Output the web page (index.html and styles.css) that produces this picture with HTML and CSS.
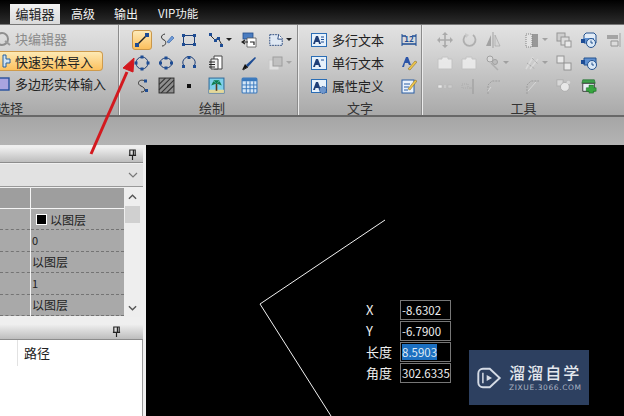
FILE: index.html
```html
<!DOCTYPE html>
<html lang="en">

<head>
	<meta charset="UTF-8" />
	<title>CAD编辑器</title>
	<link rel="stylesheet" href="styles.css">
</head>

<body>
	<div class="window">
		<div class="tabbar">
			<div class="tab active">编辑器</div>
			<div class="tab tab-high">高级</div>
			<div class="tab tab-out">输出</div>
			<div class="tab tab-vip">VIP功能</div>
		</div>

		<div class="ribbon">
			<div class="group group-select">
				<div class="select-rows">
					<div class="select-row muted">
						<svg class="ic-clip" viewBox="0 0 12 16"><circle cx="2" cy="8" r="6" fill="none" stroke="#8f8f8f" stroke-width="2"/><path d="M5 10l5 4" stroke="#9a9a9a" stroke-width="2"/></svg>
						块编辑器
					</div>
					<div class="select-row picked">
						<svg class="ic-clip" viewBox="0 0 12 16"><path d="M3 2h3v4h4v4H6v4H3z" fill="#cfe3f5" stroke="#27609e"/></svg>
						快速实体导入
					</div>
					<div class="select-row">
						<svg class="ic-clip" viewBox="0 0 12 16"><rect x="-4" y="2" width="13" height="12" fill="#a9a4e0" stroke="#27509e" stroke-width="1.4"/></svg>
						多边形实体输入
					</div>
				</div>
				<div class="group-label label-select">选择</div>
			</div>

			<div class="group group-draw">
				<div class="draw-grid">
					<span class="hot">
						<svg class="ic" viewBox="0 0 16 16"><path d="M3 13L13 3" stroke="#222" stroke-width="1.4"/><rect x="1" y="11" width="4" height="4" fill="#1d4c94"/><rect x="11" y="1" width="4" height="4" fill="#1d4c94"/></svg>
					</span>
					<svg class="ic" viewBox="0 0 16 16"><path d="M7 2C2 3 3 7 6 8s2 6-2 6" fill="none" stroke="#333"/><path d="M9 10l5-6 2 2-5 5z" fill="#6f9bd8" stroke="#2e5ea5" stroke-width=".6"/></svg>
					<svg class="ic" viewBox="0 0 16 16"><rect x="2.5" y="3.5" width="11" height="9" fill="none" stroke="#1d3f78"/><rect x="1" y="2" width="3" height="3" fill="#1d4c94"/><rect x="12" y="2" width="3" height="3" fill="#1d4c94"/><rect x="1" y="11" width="3" height="3" fill="#1d4c94"/><rect x="12" y="11" width="3" height="3" fill="#1d4c94"/></svg>
					<span class="with-caret">
						<svg class="ic" viewBox="0 0 16 16"><path d="M2 3l5 5 3-2 4 7" fill="none" stroke="#333"/><rect x="1" y="1" width="3" height="3" fill="#1d4c94"/><rect x="6" y="7" width="3" height="3" fill="#1d4c94"/><rect x="9" y="5" width="3" height="3" fill="#1d4c94"/><rect x="12" y="12" width="3" height="3" fill="#1d4c94"/></svg>
						<i class="caret"></i>
					</span>
					<svg class="ic" viewBox="0 0 16 16"><rect x="2" y="1" width="10" height="6" fill="#4a7cc0" stroke="#234e8d" stroke-width=".8"/><path d="M6 6h9v9H6z" fill="#fff" stroke="#555" stroke-width=".8"/><path d="M1 10h6M4 8l-3 2 3 2M9 10h4v3" fill="none" stroke="#222" stroke-width="1.2"/></svg>
					<span class="with-caret">
						<svg class="ic" viewBox="0 0 18 16"><path d="M2 2h10l4 4v8H2z" fill="#dfe8f3" stroke="#1d3f78" stroke-dasharray="2 1"/><path d="M12 2l-1 5h5" fill="#fff" stroke="#1d3f78"/></svg>
						<i class="caret"></i>
					</span>

					<svg class="ic" viewBox="0 0 16 16"><use href="#circle-nodes"/></svg>
					<svg class="ic" viewBox="0 0 16 16"><ellipse cx="8" cy="8" rx="6" ry="5" fill="none" stroke="#1d3f78"/><rect x="6.500" y="1.500" width="3" height="3" fill="#1d4c94"/><rect x="6.500" y="11.500" width="3" height="3" fill="#1d4c94"/><rect x="1" y="6.500" width="3" height="3" fill="#1d4c94"/><rect x="12" y="6.500" width="3" height="3" fill="#1d4c94"/></svg>
					<svg class="ic" viewBox="0 0 16 16"><path d="M3 11A6 6 0 1 1 13 11" fill="none" stroke="#1d3f78"/><rect x="6.500" y="1" width="3" height="3" fill="#1d4c94"/><rect x="1" y="10" width="3" height="3" fill="#1d4c94"/><rect x="12" y="10" width="3" height="3" fill="#1d4c94"/></svg>
					<svg class="ic" viewBox="0 0 16 16"><path d="M6 1h8v13H6z" fill="#fff" stroke="#444"/><path d="M3 4h7v10H3z" fill="#eee" stroke="#444"/><path d="M1 7h6M1 9.500h6M1 12h6" stroke="#222"/></svg>
					<svg class="ic" viewBox="0 0 16 16"><path d="M1 15l3-6 3 3z" fill="#111"/><path d="M5 10l9-8 1 1-8 9z" fill="#1d4c94"/><path d="M2 15l5-3" stroke="#222"/></svg>
					<span class="with-caret faded">
						<svg class="ic" viewBox="0 0 16 16"><rect x="1" y="5" width="10" height="10" fill="#e8e8e8" stroke="#c8c8c8"/><rect x="5" y="2" width="9" height="9" fill="#bdbdbd" stroke="#8e8e8e"/></svg>
						<i class="caret"></i>
					</span>

					<svg class="ic" viewBox="0 0 16 16"><path d="M11 3C5 0 2 6 7 8s5 6 0 6" fill="none" stroke="#333"/><rect x="10" y="1.500" width="3" height="3" fill="#1d4c94"/><rect x="11" y="11" width="3" height="3" fill="#1d4c94"/></svg>
					<svg class="ic ic-lg" viewBox="0 0 16 16"><rect x="1" y="1" width="14" height="14" fill="#8f8f8f" stroke="#333"/><path d="M1 7l6-6M1 12L12 1M3 15L15 3M8 15l7-7" stroke="#333"/></svg>
					<svg class="ic" viewBox="0 0 16 16"><rect x="6" y="6" width="4" height="4" fill="#111"/></svg>
					<svg class="ic ic-lg" viewBox="0 0 16 16"><rect x="1" y="1" width="14" height="14" fill="#7fd0ea" stroke="#336d9c"/><rect x="1" y="12" width="14" height="3" fill="#e4d89a"/><path d="M8 13V6" stroke="#5a3d1e" stroke-width="1.500"/><path d="M8 6L3 8l2-4zM8 6l5 2-2-4zM8 6L5 3h6z" fill="#0e7d4d"/></svg>
					<svg class="ic ic-lg" viewBox="0 0 16 16"><rect x="1" y="1" width="14" height="14" rx="1" fill="#d5e6f7" stroke="#3a79bd"/><rect x="1" y="1" width="14" height="3" fill="#3a79bd"/><path d="M1 7.500h14M1 11h14M5 4v11M8.500 4v11M12 4v11" stroke="#3a79bd" stroke-width=".9"/></svg>
				</div>
				<div class="group-label label-draw">绘制</div>
			</div>

			<div class="group group-text">
				<div class="text-grid">
					<div class="text-item"><svg class="ic" viewBox="0 0 16 16"><use href="#text-box"/><path d="M10 5h3M10 7.500h3M10 10h3" stroke="#1d4c94"/></svg>多行文本</div>
					<svg class="ic ic-wide" viewBox="0 0 16 16"><path d="M1 4h4M11 4h4M1 12h14" stroke="#1d4c94" stroke-width="1.500"/><path d="M1 2v12M15 2v12" stroke="#1d4c94"/><text x="8" y="10" class="mini-num">12</text></svg>
					<div class="text-item"><svg class="ic" viewBox="0 0 16 16"><use href="#text-box"/><path d="M10 5h3" stroke="#1d4c94"/></svg>单行文本</div>
					<svg class="ic" viewBox="0 0 16 16"><path d="M1 12L5 2h2l3 8H8L7 8H4l-1 4z" fill="#2c55a8"/><path d="M7 14l7-8 2 1-7 8z" fill="#efc64b" stroke="#7b6320" stroke-width=".5"/></svg>
					<div class="text-item"><svg class="ic" viewBox="0 0 16 16"><use href="#text-box"/><circle cx="12" cy="12" r="3.500" fill="#6d96cc" stroke="#244f8f" stroke-dasharray="1.500 1"/></svg>属性定义</div>
					<svg class="ic" viewBox="0 0 16 16"><rect x="1" y="2" width="12" height="13" fill="#eaf2fb" stroke="#2a5ea5"/><path d="M3 6h6M3 9h5M3 12h4" stroke="#2a5ea5"/><path d="M7 11l7-9 2 1-7 9z" fill="#efc64b" stroke="#7b6320" stroke-width=".5"/></svg>
				</div>
				<div class="group-label">文字</div>
			</div>

			<div class="group group-tools">
				<div class="tools-grid">
					<svg class="ic off" viewBox="0 0 16 16"><path d="M8 1v14M1 8h14" stroke="#a2a2a2" stroke-width="1.600"/><path d="M8 0l3 3H5zM8 16l3-3H5zM0 8l3-3v6zM16 8l-3-3v6z" fill="#a2a2a2"/></svg>
					<svg class="ic off" viewBox="0 0 16 16"><path d="M5 3a6 6 0 1 0 7 0" fill="none" stroke="#a8a8a8" stroke-width="1.800"/><path d="M4 1l4 2-3 3z" fill="#c8c8c8"/></svg>
					<svg class="ic off" viewBox="0 0 16 16"><path d="M8 0v16" stroke="#999"/><path d="M6 3v11H1z" fill="#999"/><path d="M10 3v11h5z" fill="#d4d4d4" stroke="#999" stroke-width=".6"/></svg>
					<span class="with-caret off">
						<svg class="ic" viewBox="0 0 16 16"><rect x="2" y="2" width="12" height="13" fill="#8d8d8d"/><rect x="2" y="2" width="6" height="13" fill="#e4e4e4" stroke="#777" stroke-dasharray="1 1"/></svg>
						<i class="caret"></i>
					</span>
					<svg class="ic off" viewBox="0 0 16 16"><use href="#stack-a"/></svg>
					<svg class="ic" viewBox="0 0 16 16"><use href="#clock-box"/></svg>
					<svg class="ic off" viewBox="0 0 16 16"><path d="M2 3h11v4H2z" fill="#9b9b9b"/><path d="M6 9h7v5H6z" fill="#ddd" stroke="#8a8a8a"/><path d="M15 1v14" stroke="#9b9b9b"/></svg>

					<svg class="ic off" viewBox="0 0 16 16"><use href="#tray"/></svg>
					<svg class="ic off" viewBox="0 0 16 16"><use href="#tray"/></svg>
					<span class="with-caret off">
						<svg class="ic" viewBox="0 0 16 16"><circle cx="5" cy="4" r="3" fill="#ddd" stroke="#999"/><circle cx="10" cy="7" r="2.500" fill="#bbb" stroke="#999"/><path d="M6 8l7 7" stroke="#aaa" stroke-width="1.500"/></svg>
						<i class="caret"></i>
					</span>
					<span class="with-caret off">
						<svg class="ic" viewBox="0 0 16 16"><path d="M2 14l7-12M6 14l8-10" stroke="#ddd" stroke-width="1.500"/><path d="M3 8l8 6M8 3l6 6" stroke="#999" stroke-dasharray="1 1"/></svg>
						<i class="caret"></i>
					</span>
					<svg class="ic off" viewBox="0 0 16 16"><rect x="1" y="1" width="7" height="7" fill="#eee" stroke="#8a8a8a"/><rect x="8" y="8" width="7" height="7" fill="#eee" stroke="#8a8a8a"/></svg>
					<svg class="ic" viewBox="0 0 16 16"><path d="M3 3h12v7H3z" fill="#5f90d0" stroke="#24528f"/><rect x="0" y="5" width="4" height="4" fill="#1d4c94"/><circle cx="11" cy="10" r="4.500" fill="#dbe9f7" stroke="#24528f"/><path d="M11 7.500V10h2" fill="none" stroke="#24528f"/></svg>
					<span></span>

					<svg class="ic off" viewBox="0 0 16 16"><rect x="1" y="7" width="4" height="3" fill="#f2f2f2" stroke="#b4b4b4" stroke-width=".6"/><rect x="7" y="7" width="2" height="3" fill="#ccc"/><rect x="11" y="7" width="4" height="3" fill="#d0d0d0" stroke="#b4b4b4" stroke-width=".6"/></svg>
					<svg class="ic off" viewBox="0 0 16 16"><path d="M1 6h6v4H1z" fill="none" stroke="#aaa" stroke-dasharray="1 1"/><path d="M12 1v15" stroke="#a0a0a0" stroke-width="1.500"/><path d="M8 10h4" stroke="#aaa"/></svg>
					<svg class="ic off" viewBox="0 0 16 16"><path d="M3 16V7l4-4h8" fill="none" stroke="#999" stroke-dasharray="2 1"/><path d="M3 13l3-4" stroke="#ddd"/></svg>
					<svg class="ic off" viewBox="0 0 16 16"><path d="M3 16V7l4-4h8" fill="none" stroke="#999" stroke-dasharray="2 1"/><path d="M4 13l8-9" stroke="#ddd"/></svg>
					<svg class="ic off" viewBox="0 0 18 16"><rect x="1" y="1" width="7" height="7" fill="#ddd" stroke="#aaa"/><circle cx="10" cy="9" r="5" fill="#f0f0f0" stroke="#aaa"/><circle cx="14" cy="4" r="2" fill="#ddd"/></svg>
					<svg class="ic" viewBox="0 0 18 16"><path d="M2 1h13l1 4H1z" fill="#3fa24c" stroke="#1e6a2c" stroke-width=".7"/><path d="M2 5h13v9H2z" fill="#e8eef5" stroke="#333"/><path d="M9 7h5v3h3v4h-3v2H9v-2H6v-4h3z" fill="#37a63f" stroke="#176b24" stroke-width=".6"/></svg>
					<span></span>
				</div>
				<div class="group-label">工具</div>
			</div>
		</div>

		<div class="band"></div>

		<div class="workspace">
			<div class="side">
				<div class="panel-head"><svg class="pin" viewBox="0 0 10 12"><use href="#pin"/></svg></div>
				<div class="combo"><svg class="chevron" viewBox="0 0 10 6"><path d="M1 1l4 4 4-4" fill="none" stroke="#777" stroke-width="1.200"/></svg></div>
				<div class="props">
					<table class="prop-table">
						<thead>
							<tr><th class="col-name"></th><th></th></tr>
						</thead>
						<tbody>
							<tr><td></td><td class="big"><span class="swatch"></span>以图层</td></tr>
							<tr><td></td><td>0</td></tr>
							<tr><td></td><td class="big">以图层</td></tr>
							<tr><td></td><td>1</td></tr>
							<tr><td></td><td class="big">以图层</td></tr>
						</tbody>
					</table>
					<div class="scrollbar">
						<svg class="sb-arrow" viewBox="0 0 10 6"><path d="M1 5l4-4 4 4" fill="none" stroke="#555" stroke-width="1.500"/></svg>
						<div class="sb-thumb"></div>
						<svg class="sb-arrow sb-down" viewBox="0 0 10 6"><path d="M1 1l4 4 4-4" fill="none" stroke="#555" stroke-width="1.500"/></svg>
					</div>
				</div>
				<div class="panel-head second"><svg class="pin" viewBox="0 0 10 12"><use href="#pin"/></svg></div>
				<div class="file-list">
					<div class="file-head"><span class="file-path">路径</span></div>
				</div>
			</div>

			<div class="canvas">
				<svg class="drawing" viewBox="0 0 478 271"><path d="M239 75L114 159L185 271" fill="none" stroke="#f2f2f2"/></svg>

				<div class="dyn-input">
					<span class="dyn-label">X</span><span class="dyn-box">-8.6302</span>
					<span class="dyn-label">Y</span><span class="dyn-box">-6.7900</span>
					<span class="dyn-label">长度</span><span class="dyn-box"><b class="sel">8.5903</b></span>
					<span class="dyn-label">角度</span><span class="dyn-box">302.6335</span>
				</div>

				<div class="watermark">
					<svg class="wm-logo" viewBox="0 0 34 34"><path d="M9 5h9l13 12-13 12H9a6 6 0 0 1-6-6V11a6 6 0 0 1 6-6z" fill="none" stroke="#d5dbe5" stroke-width="2.500"/><path d="M9 10v14" stroke="#d5dbe5" stroke-width="2"/><path d="M14 13l7 4-7 4z" fill="#d5dbe5"/></svg>
					<div class="wm-text">
						<div class="wm-name">溜溜自学</div>
						<div class="wm-site">ZIXUE.3066.COM</div>
					</div>
				</div>
			</div>
		</div>

		<svg class="arrow" viewBox="0 0 624 416"><path d="M91 154L127 72" stroke="#d3191f" stroke-width="3"/><path d="M134 58L123 68L133 72z" fill="#d3191f" stroke="#d3191f" stroke-width="1"/></svg>
	</div>

	<svg class="defs" width="0" height="0">
		<symbol id="circle-nodes" viewBox="0 0 16 16"><circle cx="8" cy="8" r="6" fill="none" stroke="#1d3f78"/><rect x="6.500" y="0.500" width="3" height="3" fill="#1d4c94"/><rect x="6.500" y="12.500" width="3" height="3" fill="#1d4c94"/><rect x="0.500" y="6.500" width="3" height="3" fill="#1d4c94"/><rect x="12.500" y="6.500" width="3" height="3" fill="#1d4c94"/></symbol>
		<symbol id="text-box" viewBox="0 0 16 16"><rect x="0.500" y="1.500" width="15" height="13" fill="#e6f1fb" stroke="#2a6db5"/><path d="M2 12L5 4h2l3 8H8L7.500 10h-3L4 12z" fill="#1f3f78"/></symbol>
		<symbol id="stack-a" viewBox="0 0 16 16"><rect x="1" y="1" width="8" height="8" fill="#ccc" stroke="#8a8a8a"/><rect x="5" y="5" width="8" height="8" fill="#ddd" stroke="#8a8a8a"/><rect x="9" y="9" width="6" height="6" fill="#eee" stroke="#8a8a8a"/></symbol>
		<symbol id="clock-box" viewBox="0 0 16 16"><path d="M5 1h8l2 2v8H3V3z" fill="#e2ecf7" stroke="#24528f"/><path d="M2 6h11v5H2z" fill="#5f90d0"/><rect x="0" y="7" width="4" height="4" fill="#1d4c94"/><circle cx="10" cy="11" r="4.500" fill="#dbe9f7" stroke="#24528f"/><path d="M10 8.500V11h2" fill="none" stroke="#24528f"/></symbol>
		<symbol id="tray" viewBox="0 0 16 16"><path d="M1 4h4V2h6v2h4v10H1z" fill="#eeeeee" stroke="#c2c2c2"/></symbol>
		<symbol id="pin" viewBox="0 0 10 12"><path d="M2 1h6v6H2zM1 7h8M5 7v5M6 1v6" fill="none" stroke="#222" stroke-width="1.300"/></symbol>
	</svg>
</body>

</html>
```

FILE: styles.css
```css
body {
	font-family: "Noto Sans CJK SC", "Liberation Sans", sans-serif;
	margin: 0;
	background: #000;
}

.window {
	position: relative;
	width: 624px;
	height: 416px;
	overflow: hidden;
	font-size: 13px;
	color: #222;
}

.defs {
	position: absolute;
}

/* tabs */

.tabbar {
	display: flex;
	height: 24px;
	box-sizing: border-box;
	padding: 4px 0 0 10px;
	background: linear-gradient(#000, #2c2c2c);
	color: #f2f2f2;
	font-size: 12px;
	line-height: 19px;
}

.tab {
	height: 20px;
}

.active {
	width: 50px;
	text-align: center;
	font-size: 13px;
	background: linear-gradient(#f2f2f2, #dadada);
	color: #222;
}

.tab-high {
	margin-left: 11px;
}

.tab-out {
	margin-left: 19px;
}

.tab-vip {
	margin-left: 20px;
	font-size: 11.5px;
}

/* ribbon */

.ribbon {
	display: flex;
	height: 93px;
	box-sizing: border-box;
	border-top: 1px solid #777;
	border-bottom: 2px solid #686868;
	background: linear-gradient(#e2e2e2, #d6d6d6 25%, #a9a9a9);
}

.group {
	position: relative;
	flex: none;
	box-sizing: border-box;
	border-right: 1px solid #8b8b8b;
	box-shadow: 1px 0 0 #ececec;
}

.group-select {
	width: 119px;
	margin-right: 1px;
}

.group-draw {
	width: 178px;
	margin-right: 1px;
	padding: 3px 0 0 14px;
}

.group-text {
	width: 123px;
	margin-right: 1px;
	padding: 3px 0 0 12px;
}

.group-tools {
	width: 201px;
	border-right: 0;
	box-shadow: none;
	padding: 3px 0 0 14px;
}

.group-label {
	position: absolute;
	left: 0;
	right: 0;
	bottom: 0;
	height: 15px;
	line-height: 15px;
	text-align: center;
	color: #333;
}

.label-select {
	text-align: left;
	left: -3px;
}

.label-draw {
	padding-left: 7px;
}

.select-rows {
	display: flex;
	flex-direction: column;
	padding-top: 2px;
}

.select-row {
	display: flex;
	align-items: center;
	gap: 3px;
	height: 23px;
	white-space: nowrap;
	width: 103px;
	box-sizing: border-box;
}

.select-row.muted {
	color: #8a8a8a;
}

.select-row.picked {
	height: 20px;
	margin: 1px 0;
	background: linear-gradient(#fde9b4, #fcc15f);
	border: 1px solid #cf9b4c;
	border-left: 0;
	border-radius: 0 4px 4px 0;
}

.ic-clip {
	width: 12px;
	height: 16px;
	flex: none;
}

.ic {
	width: 16px;
	height: 16px;
	flex: none;
	display: block;
}

.ic-lg {
	width: 17px;
	height: 17px;
}

.off {
	opacity: 0.85;
}

.faded {
	opacity: 0.75;
}

.caret {
	display: block;
	width: 0;
	height: 0;
	margin: 0 0 0 2px;
	border: 3px solid transparent;
	border-top: 3px solid #222;
	border-bottom: 0;
}

.off .caret,
.faded .caret {
	border-top-color: #999;
}

.with-caret {
	display: flex;
	align-items: center;
}

.hot {
	display: flex;
	align-items: center;
	justify-content: center;
	width: 18px;
	height: 18px;
	margin-left: -2px;
	background: linear-gradient(#fdeab8, #fbbf5c);
	border: 1px solid #c9974a;
	border-radius: 3px;
}

.draw-grid {
	display: grid;
	grid-template-columns: 24px 23px 27px 33px 27px 24px;
	grid-auto-rows: 23px;
	align-items: center;
	justify-items: start;
}

.tools-grid {
	display: grid;
	grid-template-columns: 24px 24px 39px 32px 25px 24px 24px;
	grid-auto-rows: 23px;
	align-items: center;
	justify-items: start;
}

.text-grid {
	display: grid;
	grid-template-columns: 90px 24px;
	grid-auto-rows: 23px;
	align-items: center;
}

.text-item {
	display: flex;
	align-items: center;
	gap: 5px;
	white-space: nowrap;
}

.mini-num {
	font-size: 8px;
	font-weight: bold;
	text-anchor: middle;
	fill: #1d4c94;
}

.band {
	height: 28px;
	background: linear-gradient(#a6a6a6, #b4b4b4);
}

/* left panels */

.workspace {
	display: flex;
	height: 271px;
}

.side {
	width: 146px;
	box-sizing: border-box;
	background: #efefef;
	border-right: 3px solid #efefef;
	padding-top: 2px;
}

.panel-head {
	display: flex;
	align-items: center;
	justify-content: flex-end;
	height: 15px;
	padding-right: 6px;
	background: linear-gradient(#f0f0f0, #bdbdbd);
	border-bottom: 1px solid #8c8c8c;
}

.panel-head.second {
	padding-right: 22px;
	margin-top: 7px;
}

.pin {
	width: 9px;
	height: 11px;
}

.combo {
	display: flex;
	align-items: center;
	justify-content: flex-end;
	height: 22px;
	margin-top: 1px;
	padding-right: 5px;
	background: #e2e2e2;
	border-bottom: 1px solid #999;
}

.chevron {
	width: 10px;
	height: 6px;
}

.props {
	display: flex;
	height: 129px;
	margin-top: 1px;
}

.prop-table {
	width: 124px;
	height: 128px;
	table-layout: fixed;
	border-collapse: collapse;
	background: #a9a9a9;
}

.prop-table th {
	height: 20px;
	padding: 0;
	border-bottom: 1px solid #f4f4f4;
	background: #9e9e9e;
}

.prop-table th:first-child,
.prop-table td:first-child {
	width: 30px;
	border-right: 1px solid #f4f4f4;
}

.prop-table td {
	padding: 0 0 0 1px;
	height: 20px;
	border-bottom: 1px dashed #747474;
	font-size: 11px;
	line-height: 15px;
	color: #222;
}

.prop-table td.big {
	font-size: 12px;
}

.swatch {
	display: inline-block;
	width: 9px;
	height: 9px;
	margin: 0 3px 0 4px;
	background: #000;
	border: 1px solid #fff;
}

.scrollbar {
	display: flex;
	flex-direction: column;
	align-items: center;
	width: 17px;
	background: #eeeeee;
	box-sizing: border-box;
	padding-top: 6px;
}

.sb-arrow {
	width: 9px;
	height: 6px;
	flex: none;
}

.sb-thumb {
	width: 15px;
	height: 17px;
	margin-top: 6px;
	background: #d0d0d0;
}

.sb-down {
	margin-top: auto;
	margin-bottom: 6px;
}

.file-list {
	height: 76px;
	background: #fff;
	border: 1px solid #9a9a9a;
	border-width: 0 1px 0 0;
}

.file-head {
	height: 26px;
	width: 100%;
	box-sizing: border-box;
	padding-left: 24px;
	line-height: 25px;
	font-size: 13px;
	position: relative;
}

.file-head::before {
	content: "";
	position: absolute;
	left: 17px;
	top: 0;
	bottom: 0;
	border-left: 1px solid #e2e2e2;
}

/* drawing area */

.canvas {
	position: relative;
	flex: 1;
	background: #000;
	color: #eee;
}

.drawing {
	position: absolute;
	left: 0;
	top: 0;
	width: 478px;
	height: 271px;
}

.dyn-input {
	position: absolute;
	left: 220px;
	top: 155px;
	display: grid;
	grid-template-columns: 34px 51px;
	grid-auto-rows: 20px;
	row-gap: 1px;
	align-items: center;
	font-size: 11.5px;
}

.dyn-label {
	font-size: 13px;
	line-height: 20px;
}

.dyn-box {
	box-sizing: border-box;
	height: 20px;
	padding-left: 1px;
	line-height: 18px;
	border: 1px solid #777;
	background: #000;
	white-space: nowrap;
}

.sel {
	font-weight: normal;
	background: #1c6fc0;
	color: #dfeaf5;
}

.watermark {
	position: absolute;
	left: 323px;
	top: 205px;
	display: flex;
	align-items: center;
	gap: 7px;
	width: 120px;
	height: 55px;
	box-sizing: border-box;
	padding-left: 7px;
	background: #2d4060;
	color: #e4e8ee;
}

.wm-logo {
	width: 26px;
	height: 26px;
	flex: none;
}

.wm-text {
	text-align: center;
}

.wm-name {
	font-size: 16px;
	font-weight: 500;
	letter-spacing: 2px;
	line-height: 19px;
	white-space: nowrap;
}

.wm-site {
	font-family: "DejaVu Sans", sans-serif;
	font-size: 7.5px;
	line-height: 11px;
	letter-spacing: 0.6px;
	color: #aab3c2;
	white-space: nowrap;
}

.arrow {
	position: absolute;
	left: 0;
	top: 0;
	width: 624px;
	height: 416px;
	pointer-events: none;
}
```
